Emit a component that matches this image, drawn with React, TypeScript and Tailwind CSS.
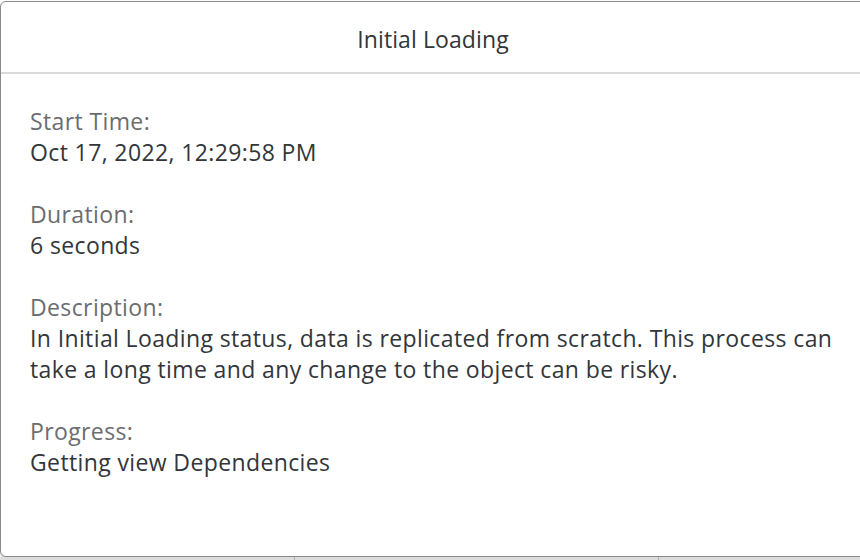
import React from "react";

const Field = ({ label, children }: { label: string; children: React.ReactNode }) => (
  <div className="mb-[31px]">
    <div className="text-[#6a6d70]">{label}</div>
    <div className="text-[#32363a]">{children}</div>
  </div>
);

export default function App() {
  return (
    <div
      className="relative w-[860px] h-[560px] overflow-hidden bg-white flex flex-col"
      style={{ fontFamily: '"Open Sans", "Noto Sans", sans-serif' }}
    >
      <div className="h-[1px] shrink-0" />
      <div className="w-[868px] h-[556px] shrink-0 border border-[#8a8a8a] rounded-[6px] bg-white flex flex-col shadow-[0_1px_2px_rgba(0,0,0,0.25)]">
        <div className="h-[72px] shrink-0 border-b-2 border-[#dadada] flex items-center justify-center pr-[2px] pt-[4px]">
          <span className="text-[23px] text-[#32363a] tracking-[0.1px]">Initial Loading</span>
        </div>
        <div className="pl-[29px] pt-[32px] text-[23px] leading-[31px] tracking-[0.38px]">
          <Field label="Start Time:">Oct 17, 2022, 12:29:58 PM</Field>
          <Field label="Duration:">6 seconds</Field>
          <Field label="Description:">
            <span className="block whitespace-nowrap">
              In Initial Loading status, data is replicated from scratch. This process can
            </span>
            <span className="block whitespace-nowrap">
              take a long time and any change to the object can be risky.
            </span>
          </Field>
          <Field label="Progress:">Getting view Dependencies</Field>
        </div>
      </div>
      <div className="flex-1 bg-[#dcdcdc] flex">
        <div className="w-[295px] border-r border-[#b0b0b0]" />
        <div className="w-[364px] border-r border-[#b0b0b0]" />
      </div>
    </div>
  );
}
